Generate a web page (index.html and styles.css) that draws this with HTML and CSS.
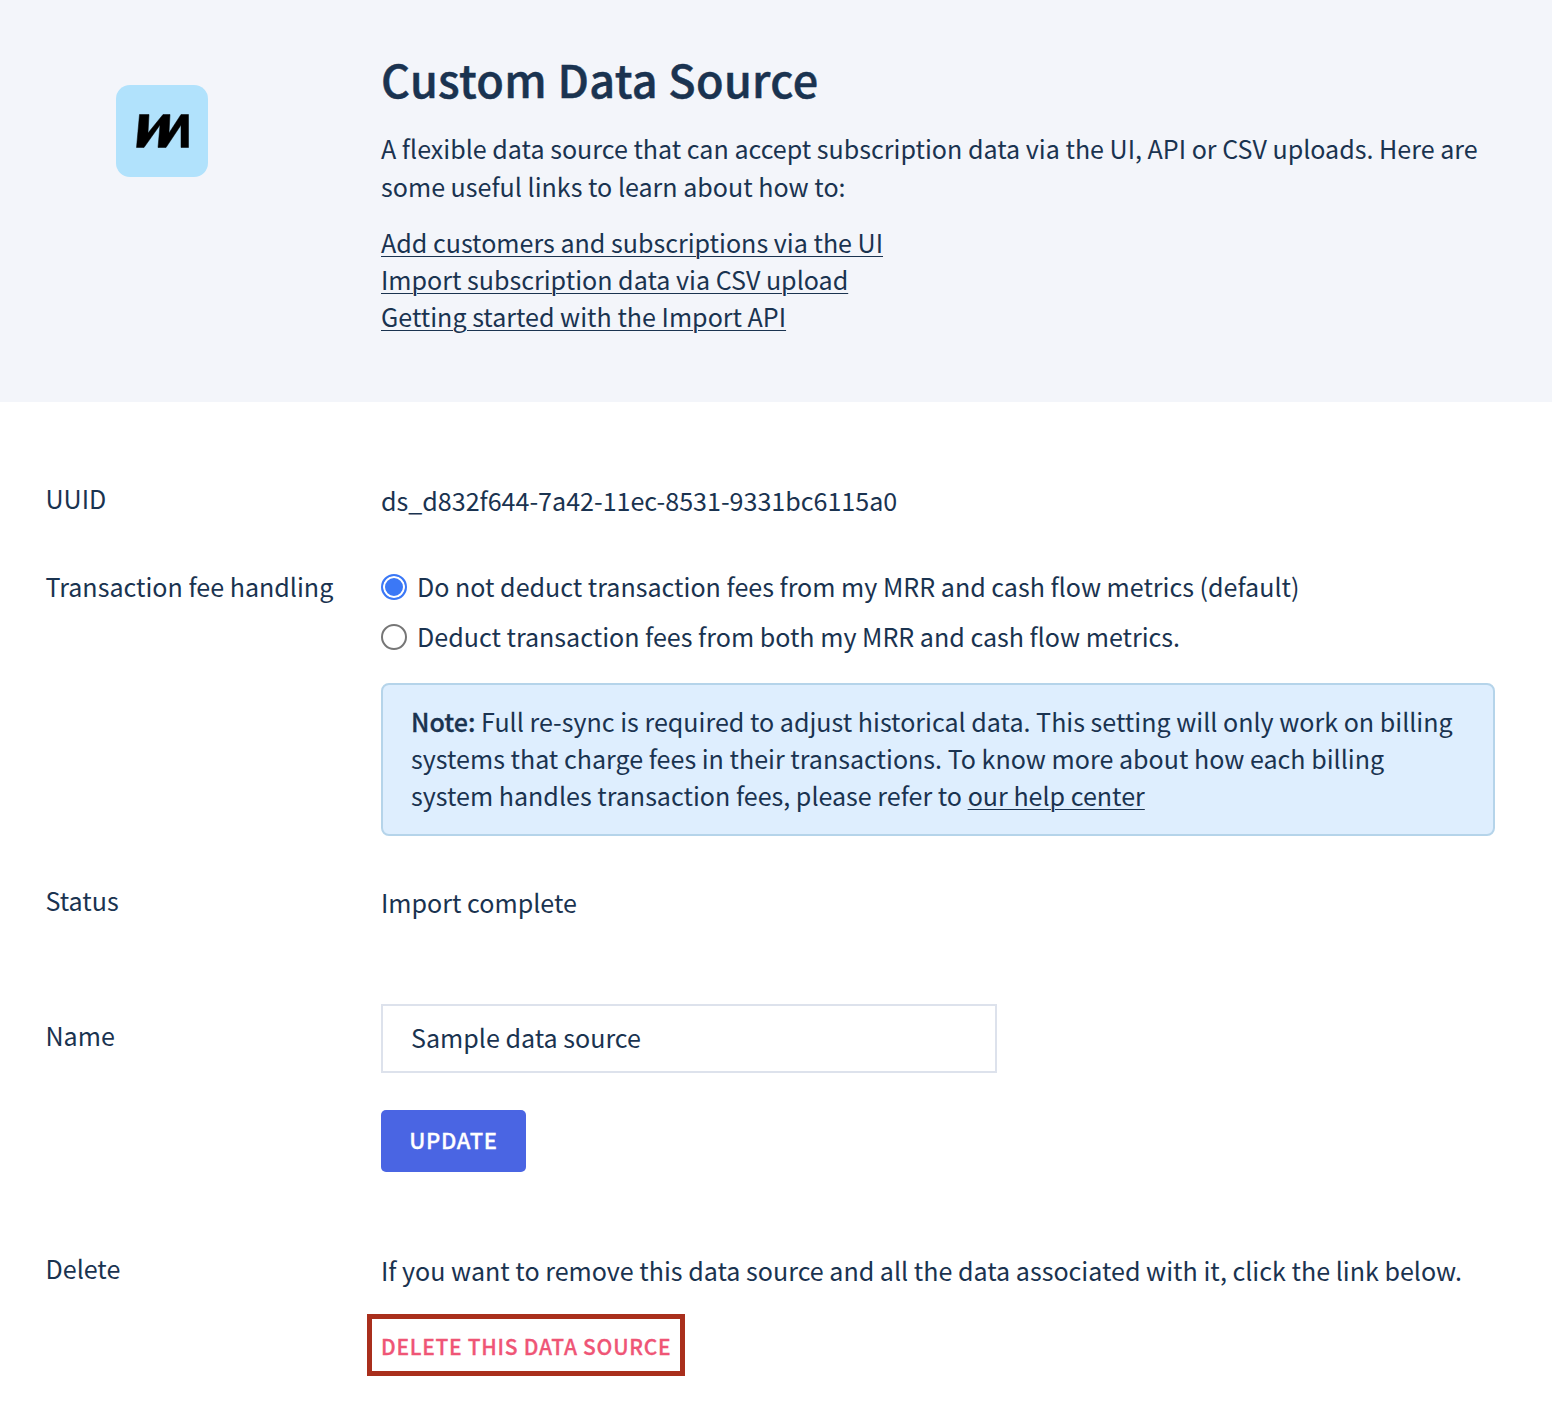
FILE: index.html
```html
<!DOCTYPE html>
<html lang="en">
<head>
<meta charset="utf-8">
<title>Custom Data Source</title>
<link rel="stylesheet" href="styles.css">
</head>
<body>
<header class="hero">
  <div class="logo-col">
    <div class="logo">
      <svg viewBox="0 0 53 34" width="53" height="34"><path d="M0.500 33.500 L3.500 0.500 H13 L12 19 L27 0.500 H34 L33 19 L45 0.500 H52.500 V33.500 H45 V11 L30 33.500 H22 L24 11 L8 33.500 Z" fill="#000" stroke="#000" stroke-width="0.500" stroke-linejoin="round"/></svg>
    </div>
  </div>
  <div class="hero-text">
    <h1>Custom Data Source</h1>
    <p class="intro">A flexible data source that can accept subscription data via the UI, API or CSV uploads. Here are some useful links to learn about how to:</p>
    <ul class="links">
      <li><a href="#">Add customers and subscriptions via the UI</a></li>
      <li><a href="#">Import subscription data via CSV upload</a></li>
      <li><a href="#">Getting started with the Import API</a></li>
    </ul>
  </div>
</header>
<main class="form">
  <section class="row row-uuid">
    <div class="label">UUID</div>
    <div class="value">ds_d832f644-7a42-11ec-8531-9331bc6115a0</div>
  </section>
  <section class="row row-fee">
    <div class="label">Transaction fee handling</div>
    <div class="value">
      <label class="radio"><span class="dot on"></span>Do not deduct transaction fees from my MRR and cash flow metrics (default)</label>
      <label class="radio"><span class="dot"></span>Deduct transaction fees from both my MRR and cash flow metrics.</label>
      <div class="note"><b>Note:</b> Full re-sync is required to adjust historical data. This setting will only work on billing systems that charge fees in their transactions. To know more about how each billing system handles transaction fees, please refer to <a href="#">our help center</a></div>
    </div>
  </section>
  <section class="row row-status">
    <div class="label">Status</div>
    <div class="value">Import complete</div>
  </section>
  <section class="row row-name">
    <div class="label">Name</div>
    <div class="value">
      <input class="input" type="text" value="Sample data source">
      <button class="update" type="button">UPDATE</button>
    </div>
  </section>
  <section class="row row-delete">
    <div class="label">Delete</div>
    <div class="value">
      <p class="del-text">If you want to remove this data source and all the data associated with it, click the link below.</p>
      <a class="del-link" href="#">DELETE THIS DATA SOURCE</a>
    </div>
  </section>
</main>
</body>
</html>
```
FILE: styles.css
```css
* { box-sizing: border-box; }
html, body { margin: 0; padding: 0; }
body {
  background: #fff;
  color: #1a3350;
  font-family: "Noto Sans CJK SC", "Noto Sans", sans-serif;
  font-size: 25.07px;
  line-height: 37px;
}
a { color: inherit; text-decoration: underline; text-underline-offset: 3px; text-decoration-thickness: 1px; }
.hero {
  background: #f3f5fa;
  height: 402px;
  display: flex;
}
.logo-col { width: 381px; padding: 85px 0 0 116px; flex: none; }
.logo {
  width: 92px; height: 92px;
  background: #b1e2fc;
  border-radius: 14px;
  display: flex; align-items: center; justify-content: center;
}
.logo svg { width: 53px; height: 34px; }
.hero-text { flex: 1; padding-right: 60px; }
h1 {
  margin: 47px 0 0;
  font-size: 45px;
  line-height: 64px;
  font-weight: 500;
  letter-spacing: 0.3px;
  -webkit-text-stroke: 0.5px #1a3350;
}
.intro { margin: 18px 0 0; line-height: 38px; }
.links { list-style: none; margin: 19px 0 0; padding: 0; }
.form { padding: 80px 57px 0 45.5px; }
.row { display: flex; }
.label { width: 335.5px; flex: none; line-height: 37px; }
.value { flex: 1; min-width: 0; }
.row-uuid .label { margin-top: -2px; }
.row-fee { margin-top: 49px; }
.radio { display: flex; align-items: center; height: 37px; margin-bottom: 13px; }
.dot {
  width: 26px; height: 26px; border-radius: 50%;
  border: 2px solid #767676; background: #fff;
  margin-right: 10px; flex: none;
}
.dot.on { border-color: #3b78f6; box-shadow: inset 0 0 0 2px #fff; background: #3b78f6; }
.note {
  margin-top: 28px;
  background: #deeefe;
  border: 2px solid #b5d4ea;
  border-radius: 8px;
  padding: 18px 28px 20px 28px;
}
.note b { font-weight: 500; -webkit-text-stroke: 0.3px #1a3350; }
.row-status { margin-top: 48px; }
.row-status .label { margin-top: -2px; }
.row-name { margin-top: 83px; }
.row-name .label { padding-top: 13px; }
.input {
  display: block;
  width: 616px; height: 69px;
  border: 2px solid #dde2ec;
  background: #fff;
  padding: 0 28px 3px;
  font: inherit;
  color: inherit;
  outline: none;
}
.update {
  display: block;
  margin-top: 37px;
  width: 145px; height: 62px;
  padding: 0 0 4px;
  background: #4a65e3;
  color: #fff;
  border: 0;
  border-radius: 5px;
  font: inherit;
  font-size: 22px;
  font-weight: 500;
  letter-spacing: 0.7px;
  -webkit-text-stroke: 0.3px #fff;
}
.row-delete { margin-top: 80px; }
.row-delete .label { margin-top: -2px; }
.del-text { margin: 0; }
.del-link {
  display: inline-block;
  margin: 25px 0 0 -14px;
  border: 5px solid #a92f1c;
  padding: 0 9px;
  height: 62px;
  line-height: 54px;
  color: #ef5576;
  font-size: 21px;
  font-weight: 500;
  letter-spacing: 0.72px;
  -webkit-text-stroke: 0.3px #ef5576;
  text-decoration: none;
}
```
